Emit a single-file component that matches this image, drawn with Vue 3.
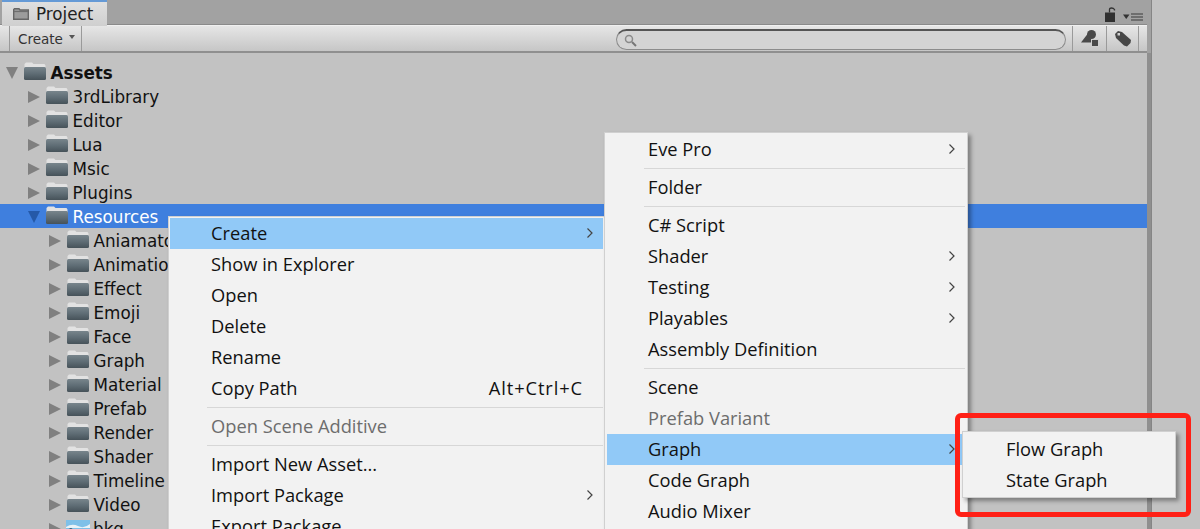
<script setup>
const tree = [
  { n: 'Assets', d: 0, open: true, bold: true },
  { n: '3rdLibrary', d: 1 }, { n: 'Editor', d: 1 }, { n: 'Lua', d: 1 }, { n: 'Msic', d: 1 }, { n: 'Plugins', d: 1 },
  { n: 'Resources', d: 1, open: true, sel: true },
  { n: 'Aniamator', d: 2 }, { n: 'Animation', d: 2 }, { n: 'Effect', d: 2 }, { n: 'Emoji', d: 2 }, { n: 'Face', d: 2 },
  { n: 'Graph', d: 2 }, { n: 'Material', d: 2 }, { n: 'Prefab', d: 2 }, { n: 'Render', d: 2 }, { n: 'Shader', d: 2 },
  { n: 'Timeline', d: 2 }, { n: 'Video', d: 2 }, { n: 'bkg', d: 2, img: true },
]
const menu1 = [
  { t: 'Create', arrow: true, hi: true }, { t: 'Show in Explorer' }, { t: 'Open' }, { t: 'Delete' }, { t: 'Rename' },
  { t: 'Copy Path', key: 'Alt+Ctrl+C' }, { sep: true }, { t: 'Open Scene Additive', dis: true }, { sep: true },
  { t: 'Import New Asset...' }, { t: 'Import Package', arrow: true }, { t: 'Export Package...' },
]
const menu2 = [
  { t: 'Eve Pro', arrow: true }, { sep: true }, { t: 'Folder' }, { sep: true }, { t: 'C# Script' },
  { t: 'Shader', arrow: true }, { t: 'Testing', arrow: true }, { t: 'Playables', arrow: true },
  { t: 'Assembly Definition' }, { sep: true }, { t: 'Scene' }, { t: 'Prefab Variant', dis: true },
  { t: 'Graph', arrow: true, hi: true }, { t: 'Code Graph' }, { t: 'Audio Mixer' },
]
const menu3 = [{ t: 'Flow Graph' }, { t: 'State Graph' }]
</script>

<template>
  <div class="page">
    <div class="panel">
      <div class="tabbar">
        <div class="tab">
          <svg class="tabicon" width="16" height="12" viewBox="0 0 16 12">
            <path d="M0.700 11.300V1.500L1.500 0.700h4.500l1 1.300h8.300v9.300z" fill="#9c9c9c" stroke="#666" stroke-width="1.400" />
            <path d="M1 3.500h14" stroke="#6e6e6e" stroke-width="1.200" />
          </svg>
          <span>Project</span>
        </div>
        <div class="tabtools">
          <svg width="11" height="15" viewBox="0 0 11 15">
            <path d="M4.500 5.500V2.500Q4.500 1 6.500 1T9.500 2.500V3.500" fill="none" stroke="#333" stroke-width="1.300" />
            <rect x="0" y="5.500" width="10" height="9.500" fill="#303030" />
          </svg>
          <svg width="20" height="9" viewBox="0 0 20 9">
            <path d="M0 1.500h6.500L3.250 6z" fill="#333" />
            <path d="M8 1h12M8 4h12M8 7h12" stroke="#3a3a3a" stroke-width="1.200" />
          </svg>
        </div>
      </div>
      <div class="toolbar">
        <div class="createbtn">Create <i class="caret"></i></div>
        <div class="search">
          <svg width="13" height="13" viewBox="0 0 13 13">
            <circle cx="5" cy="5" r="3.500" fill="none" stroke="#8a8a8a" stroke-width="1.500" />
            <path d="M8 8l4 4" stroke="#777" stroke-width="2" />
          </svg>
        </div>
        <div class="toolbtn">
          <svg width="18" height="17" viewBox="0 0 18 17">
            <circle cx="10.500" cy="4.500" r="4.500" fill="#4a4a4a" />
            <path d="M6.500 4l6 8.500H0z" fill="#4a4a4a" />
            <rect x="10.500" y="9.500" width="7" height="7" fill="#4a4a4a" stroke="#cfcfcf" stroke-width="1" />
          </svg>
        </div>
        <div class="toolbtn last">
          <svg width="18" height="18" viewBox="0 0 18 18">
            <path d="M1 4L4 1L8 2L17 10L16.500 13L13 16.500L10 15.500L2 8z" fill="#474747" />
            <rect x="3.500" y="3" width="2.500" height="2.500" fill="#d0d0d0" />
          </svg>
        </div>
      </div>
      <div class="tree">
        <div v-for="r in tree" :key="r.n" class="row" :class="['d' + r.d, { sel: r.sel }]">
          <i :class="r.open ? 'tri-down' : 'tri-right'"></i>
          <svg v-if="!r.img" class="folder" width="22" height="18" viewBox="0 0 22 18">
            <defs>
              <linearGradient id="fg" x1="0" y1="0" x2="0" y2="1">
                <stop offset="0" stop-color="#78858c" />
                <stop offset="0.500" stop-color="#5f6d75" />
                <stop offset="1" stop-color="#465259" />
              </linearGradient>
            </defs>
            <path d="M0.500 6V2L2 0.500h6L9.500 2h11L21.500 3.500V7H0.500z" fill="#e2e2e2" />
            <path d="M0 6.500Q0 5 1.500 5h19Q22 5 22 6.500V16.500Q22 18 20.500 18H1.500Q0 18 0 16.500z" fill="url(#fg)" />
          </svg>
          <svg v-else class="thumb" width="24" height="16" viewBox="0 0 24 16">
            <rect width="24" height="16" fill="#7fc0e8" />
            <path d="M0 7q6-4 12-1t12-2v4H0z" fill="#e9f2f7" />
            <path d="M0 16V10l5-2 5 3 5-2 9 2v5z" fill="#27506b" />
          </svg>
          <span class="label" :class="{ bold: r.bold }">{{ r.n }}</span>
        </div>
      </div>
    </div>
    <div class="divider"></div>

    <div class="menu m1">
      <template v-for="(m, i) in menu1" :key="i">
        <div v-if="m.sep" class="sep"></div>
        <div v-else class="item" :class="{ hi: m.hi, dis: m.dis }">
          <span>{{ m.t }}</span>
          <span v-if="m.key" class="key">{{ m.key }}</span>
          <svg v-if="m.arrow" class="arrow" width="8" height="12" viewBox="0 0 8 12"><path d="M1.500 1.500L6 6l-4.500 4.500" fill="none" stroke="#444" stroke-width="1.200" /></svg>
        </div>
      </template>
    </div>
    <div class="menu m2">
      <template v-for="(m, i) in menu2" :key="i">
        <div v-if="m.sep" class="sep"></div>
        <div v-else class="item" :class="{ hi: m.hi, dis: m.dis }">
          <span>{{ m.t }}</span>
          <svg v-if="m.arrow" class="arrow" width="8" height="12" viewBox="0 0 8 12"><path d="M1.500 1.500L6 6l-4.500 4.500" fill="none" stroke="#444" stroke-width="1.200" /></svg>
        </div>
      </template>
    </div>
    <div class="menu m3">
      <div v-for="m in menu3" :key="m.t" class="item"><span>{{ m.t }}</span></div>
    </div>
    <div class="redbox"></div>
  </div>
</template>

<style>
html, body { margin: 0; overflow: hidden; }
</style>

<style scoped>
.page {
  position: relative;
  width: 1200px;
  height: 529px;
  overflow: hidden;
  background: #c2c2c2;
  display: flex;
}
.panel { width: 1147px; height: 529px; flex: none; display: flex; flex-direction: column; }
.divider {
  width: 5px;
  height: 529px;
  box-sizing: border-box;
  background: linear-gradient(#a2a2a2 53px, #8f8f8f 53px);
  border-right: 1px solid #858585;
}
.tabbar {
  height: 25px;
  box-sizing: border-box;
  background: #a2a2a2;
  display: flex;
  justify-content: space-between;
  border-bottom: 1px solid #8a8a8a;
  flex: none;
}
.tab {
  margin-left: 2px;
  width: 105px;
  height: 26px;
  position: relative;
  z-index: 1;
  box-sizing: border-box;
  border-top: 2px solid #659ad6;
  background: linear-gradient(#e0e0e0, #cfcfcf);
  display: flex;
  align-items: center;
  gap: 7px;
  padding-left: 11px;
  font: 16.800px "DejaVu Sans", sans-serif;
  color: #222;
}
.tabtools { display: flex; align-items: flex-end; gap: 7px; padding: 0 4px 2px 0; }
.toolbar {
  height: 28px;
  flex: none;
  box-sizing: border-box;
  background: linear-gradient(#e6e6e6, #c6c6c6);
  border-bottom: 2px solid #8f8f8f;
  border-top: 1px solid #f0f0f0;
  display: flex;
  align-items: stretch;
}
.createbtn {
  margin-left: 9px;
  width: 73px;
  box-sizing: border-box;
  border-left: 1px solid #9a9a9a;
  border-right: 1px solid #9a9a9a;
  padding-left: 8px;
  font: 13.500px "DejaVu Sans", sans-serif;
  color: #333;
  display: flex;
  align-items: center;
  gap: 6px;
}
.caret { width: 0; height: 0; border: 3.500px solid transparent; border-top: 4px solid #555; border-bottom: 0; margin-top: -3px; }
.search {
  margin: 3px 0 0 534px;
  width: 450px;
  height: 21px;
  box-sizing: border-box;
  background: #d4d4d4;
  border: 1px solid #8c8c8c;
  border-top: 2px solid #555;
  border-radius: 11px;
  padding-left: 7px;
  display: flex;
  align-items: center;
}
.toolbtn {
  margin-left: 6px;
  width: 34px;
  box-sizing: border-box;
  border-left: 1px solid #9a9a9a;
  display: flex;
  align-items: center;
  justify-content: center;
}
.toolbtn + .toolbtn { margin-left: 0; width: 33px; }
.toolbtn.last { border-right: 1px solid #9a9a9a; }
.tree { background: #c2c2c2; padding-top: 7px; }
.row {
  height: 24px;
  display: flex;
  align-items: center;
  font: 16.800px "DejaVu Sans", sans-serif;
  color: #111;
  white-space: nowrap;
}
.row.d0 { padding-left: 6px; }
.row.d1 { padding-left: 28px; }
.row.d2 { padding-left: 49px; }
.row.sel { background: #3f7fde; color: #fff; }
.tri-right { width: 0; height: 0; border-left: 12px solid #808080; border-top: 6.500px solid transparent; border-bottom: 6.500px solid transparent; margin: 1px 6px 0 0; }
.tri-down { width: 0; height: 0; border-top: 12px solid #808080; border-left: 6.500px solid transparent; border-right: 6.500px solid transparent; margin: 1px 6px 0 0; }
.sel .tri-down { border-top-color: #2559a8; }
.folder { flex: none; margin-top: -2px; }
.thumb { flex: none; margin-left: -1px; }
.label { margin-left: 4.500px; padding-top: 1px; }
.thumb + .label { margin-left: 3px; }
.bold { font-weight: 700; }
.menu {
  position: absolute;
  box-sizing: border-box;
  background: #f2f2f2;
  border: 1px solid #d0d0d0;
  box-shadow: 3px 3px 4px rgba(0, 0, 0, 0.35);
  font: 18.300px "Open Sans", sans-serif;
  color: #111;
}
.m1 { left: 168px; top: 216px; width: 438px; height: 340px; padding: 1px 2px 0 1px; }
.m2 { left: 604px; top: 132px; width: 364px; height: 420px; padding: 1px 2px 0 2px; }
.m3 { left: 962px; top: 431px; width: 214px; height: 67px; padding: 2px; }
.item {
  height: 31px;
  box-sizing: border-box;
  padding: 0 0 2px 41px;
  display: flex;
  align-items: center;
  position: relative;
  white-space: nowrap;
}
.hi { background: #91c9f7; }
.dis { color: #6d6d6d; }
.key { position: absolute; right: 20px; letter-spacing: 0.900px; }
.arrow { position: absolute; right: 9px; top: 9px; }
.sep { height: 1px; margin: 3px 0 3px 37px; background: #d7d7d7; }
.redbox {
  position: absolute;
  left: 955px;
  top: 413px;
  width: 236px;
  height: 104px;
  box-sizing: border-box;
  border: 5px solid #ff2016;
  border-radius: 6px;
}
</style>
